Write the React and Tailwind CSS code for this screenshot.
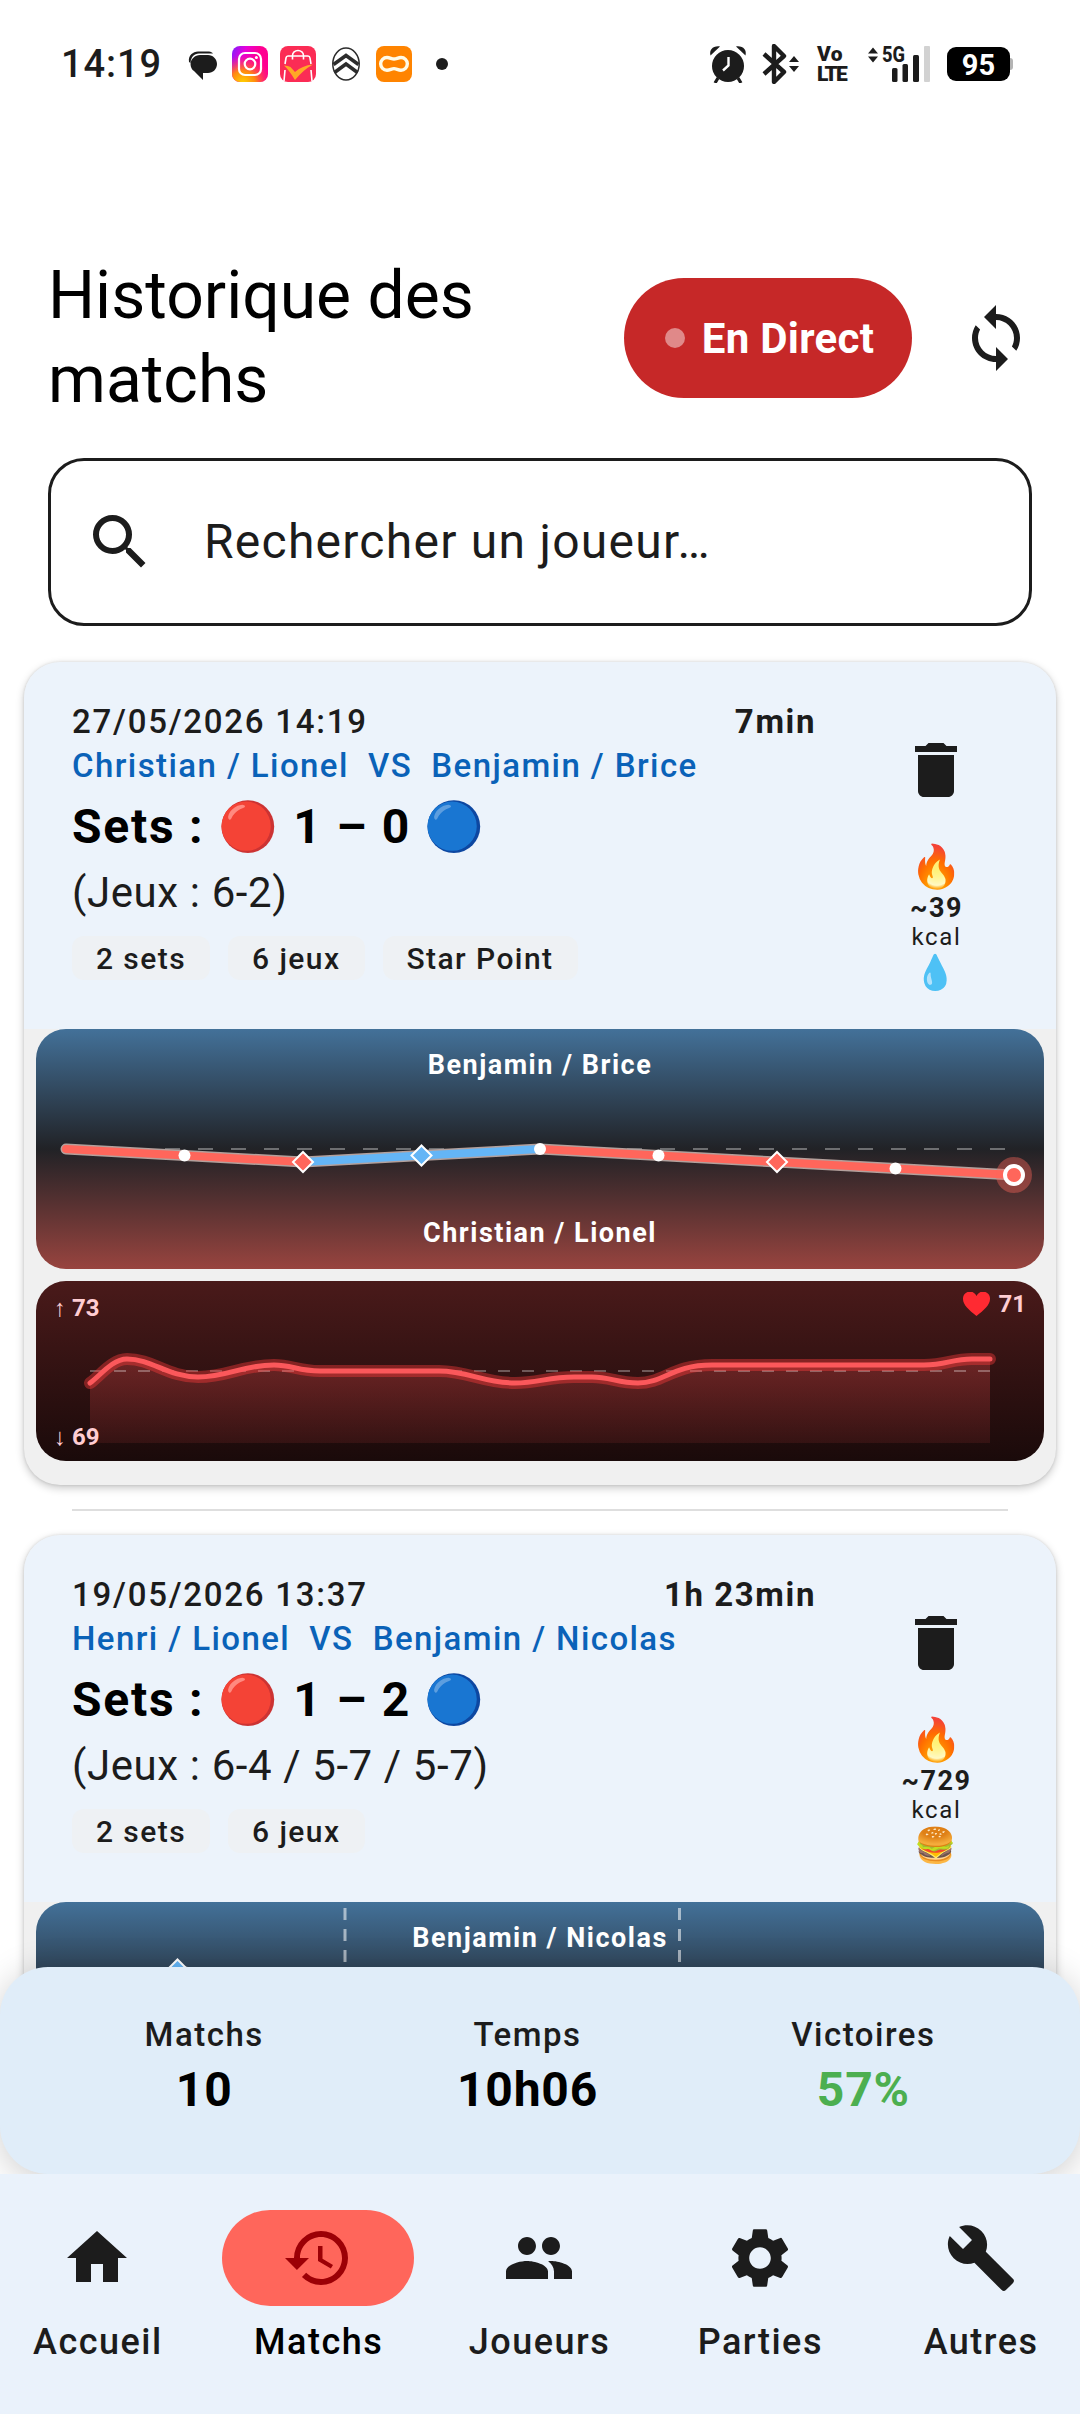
import React from "react"
import { MdBuild, MdDelete, MdGroup, MdHistory, MdHome, MdSearch, MdSettings, MdSync } from "react-icons/md"

const MATCHES = [
  {
    date: "27/05/2026 14:19",
    duration: "7min",
    teamA: "Christian / Lionel",
    teamB: "Benjamin / Brice",
    score: [1, 0],
    games: "6-2",
    tags: ["2 sets", "6 jeux", "Star Point"],
    kcal: 39,
    food: "💧",
    heartRate: { max: 73, min: 69, avg: 71 },
    setBreaks: [],
    points: [
      { x: 30, y: 120 },
      { x: 148.5, y: 126.5, type: "dot" },
      { x: 267, y: 133, type: "break" },
      { x: 385.5, y: 126.5, type: "break", up: true },
      { x: 504, y: 120, type: "dot", up: true },
      { x: 622.5, y: 126.5, type: "dot" },
      { x: 741, y: 133, type: "break" },
      { x: 859.5, y: 139.5, type: "dot" },
      { x: 978, y: 146, type: "last" },
    ],
  },
  {
    date: "19/05/2026 13:37",
    duration: "1h 23min",
    teamA: "Henri / Lionel",
    teamB: "Benjamin / Nicolas",
    score: [1, 2],
    games: "6-4 / 5-7 / 5-7",
    tags: ["2 sets", "6 jeux"],
    kcal: 729,
    food: "🍔",
    setBreaks: [309, 643.5],
    points: [
      { x: 30, y: 120 },
      { x: 141.5, y: 67.5, type: "break", up: true },
      { x: 309, y: 120 },
    ],
  },
]

const NAV = [
  { label: "Accueil", Icon: MdHome },
  { label: "Matchs", Icon: MdHistory, active: true },
  { label: "Joueurs", Icon: MdGroup },
  { label: "Parties", Icon: MdSettings },
  { label: "Autres", Icon: MdBuild },
]

const STATS = [
  { label: "Matchs", value: "10" },
  { label: "Temps", value: "10h06" },
  { label: "Victoires", value: "57%", green: true },
]

const RED = "#ff665b"
const BLUE = "#64b5f6"

const HEART_PATH =
  "M54 102C64 95 76 78 91 78C116 78 132 96 162 96C192 96 206 84 238 84C256 84 262 90 284 90H403C432 90 448 102 479 102C502 102 512 96 538 96H556C574 96 582 102 602 102C628 102 636 84 676 84H888C910 84 916 78 936 78H954"

function StatusBar() {
  return (
    <div className="flex h-32 shrink-0 items-center justify-between pl-[61px] pr-[67px] text-[#1c1c1c]">
      <div className="flex items-center">
        <span className="w-[127px] text-[38px] leading-none font-medium tracking-[0.9px]">14:19</span>
        <svg className="h-9 w-[30px]" viewBox="0 0 30 36" fill="currentColor">
          <path d="M1 16C0 9 5 6 10 5.500h11c2 0 3 1 4 2H11C6 7.500 3 11 2.500 17z" />
          <path d="M12 9h8c5 0 9 4 9 9s-4 9-9 9h-5v7l-9-9c-2-1-3.500-4-3.500-7 0-5 4.500-9 9.500-9z" />
        </svg>
        <svg className="ml-[14px] size-9" viewBox="0 0 36 36" fill="none">
          <defs>
            <linearGradient id="igBase" x1="0" y1="0" x2="0.7" y2="0.3">
              <stop offset="0" stopColor="#7a20ff" />
              <stop offset="0.5" stopColor="#e800d8" />
              <stop offset="1" stopColor="#ff0090" />
            </linearGradient>
            <radialGradient id="igGlow" cx="0.3" cy="1.05" r="0.8">
              <stop offset="0" stopColor="#ffd800" />
              <stop offset="0.45" stopColor="#ff8a10" />
              <stop offset="1" stopColor="#ff2a60" stopOpacity="0" />
            </radialGradient>
          </defs>
          <rect width="36" height="36" rx="8" fill="url(#igBase)" />
          <rect width="36" height="36" rx="8" fill="url(#igGlow)" />
          <rect x="7" y="7" width="22" height="22" rx="6" stroke="#fff" strokeWidth="2.200" />
          <circle cx="18" cy="18" r="5.300" stroke="#fff" strokeWidth="2.200" />
          <circle cx="24.400" cy="11.600" r="1.500" fill="#fff" />
        </svg>
        <svg className="ml-3 size-9" viewBox="0 0 36 36" fill="none">
          <rect width="36" height="36" rx="8" fill="#fb2c55" />
          <path d="M5 18l1-6q.3-2 2-2h20q1.700 0 2 2l1 6M5 24l-1 11M31 24l1 11" stroke="#fff" strokeWidth="1.600" />
          <path d="M12.500 13.500V9.500a5.500 5 0 0 1 11 0v4" stroke="#fff" strokeWidth="1.600" />
          <path d="M4 19.500q4 0 6.500 1.500l4.500 5q7-6.500 18-7.500Q23 24 15 34 9 24 4 19.500z" fill="#ffa826" />
        </svg>
        <svg className="ml-[15px] h-9 w-[30px]" viewBox="0 0 30 36" fill="none" stroke="#2c2c2c">
          <ellipse cx="15" cy="18" rx="13.200" ry="16" strokeWidth="1.500" />
          <path d="M2.500 18.500L15 9.500l12.500 9M3.500 26.500L15 18l11.500 8.500" strokeWidth="3.600" />
        </svg>
        <svg className="ml-[15px] size-9" viewBox="0 0 36 36" fill="none">
          <rect width="36" height="36" rx="8" fill="#ff8400" />
          <path
            d="M11 11.500c3 0 4.500 1.500 7 1.500s4-1.500 7-1.500a6.300 6.300 0 0 1 0 12.700c-3 0-4.500-1.600-7-1.600s-4 1.600-7 1.600a6.300 6.300 0 0 1 0-12.700z"
            stroke="#fffbe8"
            strokeWidth="3.400"
          />
        </svg>
        <span className="ml-6 size-3 rounded-full bg-[#1c1c1c]" />
      </div>

      <div className="flex items-center">
        <svg className="h-[38px] w-[38px]" viewBox="0 0 38 38" fill="currentColor">
          <circle cx="19" cy="21" r="16" />
          <path d="M1.500 10.500C0 5 4 .5 11 1.500zM36.500 10.500C38 5 34 .5 27 1.500z" />
          <path d="M9 33l-3 5M29 33l3 5" stroke="currentColor" strokeWidth="3.200" />
          <path d="M19.500 12v8.500L14 25.500" stroke="#fff" strokeWidth="2.400" fill="none" />
        </svg>
        <svg className="ml-[15px] h-10 w-[37px]" viewBox="0 0 37 40" fill="none">
          <path d="M2 10l20 18-10 10V2l10 10L2 30" stroke="currentColor" strokeWidth="4.400" strokeLinejoin="round" />
          <path d="M27 18l5-6 5 6zM27 22l5 6 5-6z" fill="currentColor" />
        </svg>
        <div className="ml-[18px] flex w-[33px] flex-col text-[21px] leading-[20px] font-black">
          <span className="tracking-[0.3px]">Vo</span>
          <span className="tracking-[-1.8px]">LTE</span>
        </div>
        <svg className="ml-[18px] h-10 w-[64px] overflow-visible" viewBox="0 0 64 40" fill="currentColor">
          <path d="M0 9.500l5-6 5 6zM0 12.500l5 6 5-6z" />
          <text x="14" y="17.500" fontSize="22" fontWeight="800" textLength="23" lengthAdjust="spacingAndGlyphs">
            5G
          </text>
          <rect x="24" y="24" width="5.500" height="14" rx="1.500" />
          <rect x="34.500" y="20" width="5.500" height="18" rx="1.500" />
          <rect x="45" y="11" width="6" height="27" rx="1.500" />
          <rect x="56" y="2" width="6" height="36" rx="1" fill="#d2d2d2" />
        </svg>
        <span className="ml-[15px] flex h-[34px] w-[63px] items-center justify-center rounded-[9px] bg-black pt-[2px] text-[29px] leading-none font-bold text-white">
          95
        </span>
        <span className="h-3 w-[3px] rounded-r bg-[#b4b4b4]" />
      </div>
    </div>
  )
}

function Marker({ x, y, type, up }) {
  const color = up ? BLUE : RED
  if (type === "dot") return <circle cx={x} cy={y} r="6" fill="#fff" />
  if (type === "break") {
    return <path d={`M${x} ${y - 10}L${x + 10} ${y}L${x} ${y + 10}L${x - 10} ${y}Z`} fill={color} stroke="#fff" strokeWidth="2" />
  }
  if (type === "last") {
    return (
      <g>
        <circle cx={x} cy={y} r="18" fill={color} fillOpacity="0.4" />
        <circle cx={x} cy={y} r="9" fill={color} stroke="#fff" strokeWidth="4" />
      </g>
    )
  }
  return null
}

function MomentumChart({ match }) {
  const { points, setBreaks } = match
  const outline = points.map((p) => `${p.x},${p.y}`).join(" ")

  return (
    <div className="relative h-60 overflow-hidden rounded-[30px] bg-linear-to-b/srgb from-[#437199] via-[#212226] to-[#98443f]">
      <svg className="block h-60 w-full" viewBox="0 0 1008 240" fill="none">
        <line x1="30" y1="120" x2="978" y2="120" stroke="#fff" strokeOpacity="0.35" strokeWidth="2" strokeDasharray="15 18" />
        {setBreaks.map((x) => (
          <line key={x} x1={x} y1="6" x2={x} y2="234" stroke="#fff" strokeOpacity="0.55" strokeWidth="3" strokeDasharray="12 9" />
        ))}
        <polyline points={outline} stroke="#b3a09c" strokeWidth="11" strokeLinecap="round" strokeLinejoin="round" />
        {points.slice(1).map((p, i) => (
          <line key={p.x} x1={points[i].x} y1={points[i].y} x2={p.x} y2={p.y} stroke={p.up ? BLUE : RED} strokeWidth="8" strokeLinecap="round" />
        ))}
        {points.map((p) => (
          <Marker key={p.x} {...p} />
        ))}
      </svg>
      <div className="absolute inset-0 flex flex-col items-center justify-between py-5 text-[27px] leading-8 font-bold tracking-[1.5px] text-white">
        <span>{match.teamB}</span>
        <span>{match.teamA}</span>
      </div>
    </div>
  )
}

function HeartRateChart({ max, min, avg }) {
  return (
    <div className="relative h-45 overflow-hidden rounded-[30px] bg-linear-to-b/srgb from-[#4a1a1a] to-[#1a0a0a]">
      <svg className="block h-45 w-full" viewBox="0 0 1008 180" fill="none">
        <defs>
          <linearGradient id="hrFill" gradientUnits="userSpaceOnUse" x1="0" y1="78" x2="0" y2="162">
            <stop offset="0" stopColor="#ff5252" stopOpacity="0.28" />
            <stop offset="1" stopColor="#ff5252" stopOpacity="0.1" />
          </linearGradient>
        </defs>
        <path d={`${HEART_PATH}V162H54Z`} fill="url(#hrFill)" />
        <line x1="54" y1="90" x2="954" y2="90" stroke="#fff" strokeOpacity="0.3" strokeWidth="2" strokeDasharray="12 12" />
        <path d={HEART_PATH} stroke="#ff3b3b" strokeOpacity="0.4" strokeWidth="12" strokeLinecap="round" />
        <path d={HEART_PATH} stroke="#fb585b" strokeWidth="5" strokeLinecap="round" />
      </svg>
      <div className="absolute inset-0 flex justify-between pt-[9px] pr-[18px] pb-[10px] pl-[18px] text-[24px] leading-7 font-bold text-[#ffcdd2]">
        <div className="flex flex-col justify-between pt-[4px]">
          <span>↑ {max}</span>
          <span>↓ {min}</span>
        </div>
        <div className="flex h-7 items-center gap-2">
          <svg className="h-6 w-[27px]" viewBox="0 0 27 24" fill="#ff2a32">
            <path d="M13.500 24C6 18 0 13 0 7a7 7 0 0 1 13.500-3A7 7 0 0 1 27 7c0 6-6 11-13.500 17z" />
          </svg>
          <span>{avg}</span>
        </div>
      </div>
    </div>
  )
}

function MatchCard({ match }) {
  return (
    <div className="shrink-0 overflow-hidden rounded-[36px] bg-[#f0f0f0] shadow-[0_3px_8px_rgba(0,0,0,0.22),0_0_3px_rgba(0,0,0,0.12)]">
      <div className="flex h-[367px] gap-12 bg-[#ecf3fb] px-12 pt-9">
        {/* Score */}
        <div className="flex flex-1 flex-col text-[#1c1c1c]">
          <div className="flex h-12 justify-between text-[33px] leading-[48px]">
            <span className="font-medium tracking-[1.75px]">{match.date}</span>
            <span className="font-bold tracking-[1.6px]">{match.duration}</span>
          </div>
          <p className="h-11 text-[33px] leading-[39px] font-medium tracking-[1.42px] whitespace-pre text-[#0a62b8]">
            {`${match.teamA}  VS  ${match.teamB}`}
          </p>
          <p className="h-[72px] text-[48px] leading-[74px] font-bold tracking-[1.75px] whitespace-pre text-black">
            {`Sets : 🔴 ${match.score[0]} – ${match.score[1]} 🔵`}
          </p>
          <p className="h-[60px] text-[42px] leading-[62px] tracking-[0.6px]">(Jeux : {match.games})</p>
          <div className="mt-[14px] flex gap-[18px]">
            {match.tags.map((tag) => (
              <span key={tag} className="h-11 rounded-[12px] bg-[#eef1f4] px-6 text-[30px] leading-[45px] font-medium tracking-[1.43px]">
                {tag}
              </span>
            ))}
          </div>
        </div>

        {/* Delete + calories */}
        <div className="flex w-36 flex-col items-center text-[#1c1c1c]">
          <div className="flex h-36 items-center">
            <MdDelete className="size-[72px]" />
          </div>
          <span className="h-[50px] pl-px text-[42px] leading-[49px]">🔥</span>
          <span className="h-[33px] pl-px text-[27px] leading-[33px] font-bold tracking-[1.5px]">~{match.kcal}</span>
          <span className="h-[25px] pl-px text-[24px] leading-[25px] tracking-[1.7px]">kcal</span>
          <span className="text-[34px] leading-[44px]">{match.food}</span>
        </div>
      </div>

      <div className="flex flex-col gap-3 px-3 pb-6">
        <MomentumChart match={match} />
        {match.heartRate && <HeartRateChart {...match.heartRate} />}
      </div>
    </div>
  )
}

export default function App() {
  return (
    <div className="flex h-[2414px] w-[1080px] flex-col overflow-hidden bg-white font-['Roboto','Noto_Color_Emoji',sans-serif]">
      <StatusBar />

      {/* Header */}
      <header className="mt-[126px] flex h-[168px] shrink-0 items-center px-12">
        <h1 className="flex-1 text-[66px] leading-[84px] text-black">
          Historique des
          <br />
          matchs
        </h1>
        <button className="flex h-[120px] w-72 items-center justify-center gap-[17px] rounded-full bg-[#c62828] pl-[3px] text-[42px] font-bold tracking-[0.3px] text-white">
          <span className="size-5 rounded-full bg-white/45" />
          En Direct
        </button>
        <div className="-mr-9 ml-3 flex size-36 items-center justify-center text-[#1c1c1c]">
          <MdSync className="size-[72px]" />
        </div>
      </header>

      {/* Search */}
      <div className="mx-12 mt-9 flex h-[168px] shrink-0 items-center gap-12 rounded-[36px] border-3 border-[#1c1c1c] pl-[33px] text-[#1c1c1c]">
        <MdSearch className="size-[72px]" />
        <span className="text-[48px] leading-[72px] tracking-[1.25px]">Rechercher un joueur…</span>
      </div>

      {/* List */}
      <main className="relative mt-3 min-h-0 flex-1 overflow-hidden">
        <div className="flex flex-col px-6 pt-6">
          <MatchCard match={MATCHES[0]} />
          <div className="mx-12 my-6 h-[2px] bg-[#dedede]" />
          <MatchCard match={MATCHES[1]} />
        </div>

        <div className="absolute inset-x-0 bottom-0 flex h-[207px] justify-around rounded-[48px] bg-[#e0edf9] px-12 pt-12 shadow-[0_6px_36px_rgba(0,0,0,0.2)]">
          {STATS.map((s) => (
            <div key={s.label} className="flex flex-col items-center">
              <span className="text-[33px] leading-[39px] font-medium tracking-[1.5px] text-[#1c1c1c]">{s.label}</span>
              <span className={`text-[48px] leading-[72px] font-bold tracking-[0.8px] ${s.green ? "text-[#4caf50]" : "text-black"}`}>{s.value}</span>
            </div>
          ))}
        </div>
      </main>

      {/* Bottom nav */}
      <nav className="h-60 shrink-0 bg-[#eaf2fb] pt-9">
        <div className="mr-px -ml-px flex gap-6">
          {NAV.map(({ label, Icon, active }) => (
            <div key={label} className="flex min-w-0 flex-1 flex-col items-center">
              <div className={`flex h-24 w-48 items-center justify-center rounded-full ${active ? "bg-[#ff665b] text-[#9c0006]" : "text-[#1c1c1c]"}`}>
                <Icon className="size-[72px]" />
              </div>
              <span className={`mt-3 pl-px text-[36px] leading-[48px] font-medium tracking-[1.5px] ${active ? "text-black" : "text-[#1c1c1c]"}`}>{label}</span>
            </div>
          ))}
        </div>
      </nav>
    </div>
  )
}
